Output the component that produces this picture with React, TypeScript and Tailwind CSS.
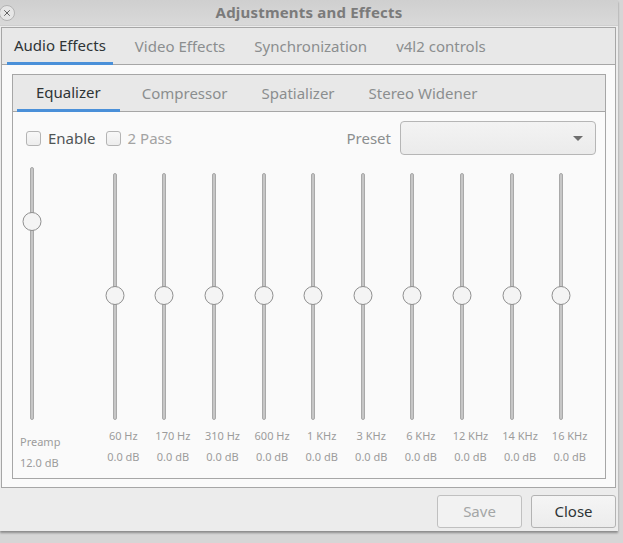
import { X } from "lucide-react"

type Band = {
  freq: string
  gain: string
}

const BANDS: Band[] = [
  { freq: "60 Hz", gain: "0.0 dB" },
  { freq: "170 Hz", gain: "0.0 dB" },
  { freq: "310 Hz", gain: "0.0 dB" },
  { freq: "600 Hz", gain: "0.0 dB" },
  { freq: "1 KHz", gain: "0.0 dB" },
  { freq: "3 KHz", gain: "0.0 dB" },
  { freq: "6 KHz", gain: "0.0 dB" },
  { freq: "12 KHz", gain: "0.0 dB" },
  { freq: "14 KHz", gain: "0.0 dB" },
  { freq: "16 KHz", gain: "0.0 dB" },
]

const MAIN_TABS = ["Audio Effects", "Video Effects", "Synchronization", "v4l2 controls"]
const AUDIO_TABS = ["Equalizer", "Compressor", "Spatializer", "Stereo Widener"]

/**
 * 縦スライダーのレール + つまみ
 */
const VSlider = ({ height, knobTop }: { height: number; knobTop: number }) => (
  <div className="relative flex justify-center" style={{ height }}>
    <div className="h-full w-[4px] rounded-full border border-[#a9a9a9] bg-[#c6c6c6]" />
    <div
      className="absolute left-1/2 h-[19px] w-[19px] -translate-x-1/2 rounded-full border border-[#8f8f8f] bg-[#f4f4f4]"
      style={{ top: knobTop }}
    />
  </div>
)

const Checkbox = ({ label, disabled }: { label: string; disabled?: boolean }) => (
  <label className="flex items-center gap-[7px]">
    <span className="h-[15px] w-[15px] rounded-[3px] border border-[#b4b4b4] bg-gradient-to-b from-[#f8f8f8] to-[#ededed]" />
    <span className={disabled ? "text-[#a3a3a3]" : "text-[#505555]"}>{label}</span>
  </label>
)

export default function App() {
  return (
    <div className="h-[543px] w-[623px] overflow-hidden bg-[#d6d6d6] font-['Noto_Sans',sans-serif] text-[15px] leading-none">
      <div className="flex h-[531px] w-[618px] flex-col bg-[#ececec] shadow-[0_2px_2px_rgba(0,0,0,0.35)]">
        {/* タイトルバー */}
        <div className="relative flex h-[26px] shrink-0 items-center justify-center border-b border-[#cfcfcf] bg-gradient-to-b from-[#cfcfcf] to-[#d9d9d9]">
          <div className="absolute left-[-1px] top-[5px] flex h-[16px] w-[16px] items-center justify-center rounded-full border border-[#b3b3b3] bg-[#e6e6e6]">
            <X className="h-[10px] w-[10px] text-[#555]" strokeWidth={2.2} />
          </div>
          <span className="font-bold tracking-[0.2px] text-[#7b7b7b]">Adjustments and Effects</span>
        </div>

        {/* 外側ノートブック */}
        <div className="ml-[1px] mt-[1px] flex h-[461px] w-[615px] flex-col border border-[#a6a6a6] bg-[#fafafa]">
          <div className="flex h-[37px] shrink-0 items-end gap-[15px] border-b border-[#a6a6a6] bg-[#e8e8e8] pl-[5px]">
            {MAIN_TABS.map((tab, i) => (
              <div
                key={tab}
                className={
                  i === 0
                    ? "mb-[-1px] flex h-[37px] items-center border-b-[3px] border-[#4a90d9] px-[7px] pt-[1px] text-[#2e3436]"
                    : "flex h-[36px] items-center px-[7px] text-[#8b8e8f]"
                }
              >
                {tab}
              </div>
            ))}
          </div>

          {/* イコライザーのフレーム */}
          <div className="ml-[10px] mt-[9px] flex h-[405px] w-[594px] flex-col border border-[#a6a6a6] bg-[#fafafa]">
            <div className="flex h-[37px] shrink-0 items-end border-b border-[#a6a6a6] bg-[#e8e8e8] pl-[4px]">
              {AUDIO_TABS.map((tab, i) => (
                <div
                  key={tab}
                  className={
                    i === 0
                      ? "mb-[-1px] mr-[5px] flex h-[37px] items-center border-b-[3px] border-[#4a90d9] px-[19px] pt-[1px] text-[#2e3436]"
                      : "flex h-[36px] items-center px-[17px] text-[#8b8e8f]"
                  }
                >
                  {tab}
                </div>
              ))}
            </div>

            <div className="mt-[9px] flex h-[34px] items-center justify-between pl-[13px] pr-[9px]">
              <div className="flex items-center gap-[10px]">
                <Checkbox label="Enable" />
                <Checkbox label="2 Pass" disabled />
              </div>
              <div className="flex items-center gap-[9px]">
                <span className="text-[#8b8e8f]">Preset</span>
                <div className="flex h-[34px] w-[196px] items-center justify-end rounded-[4px] border border-[#b6b6b6] bg-gradient-to-b from-[#f3f3f3] to-[#ebebeb] pr-[12px]">
                  <svg width="10" height="5" viewBox="0 0 10 5">
                    <path d="M0 0 L10 0 L5 5 Z" fill="#6e6e6e" />
                  </svg>
                </div>
              </div>
            </div>

            {/* スライダー列 */}
            <div className="flex items-start text-[11px] text-[#9c9c9c]">
              <div className="ml-[7px] flex w-[24px] flex-col">
                <div className="mt-[12px]">
                  <VSlider height={253} knobTop={45} />
                </div>
                <div className="mt-[11px] whitespace-nowrap leading-[21px]">
                  <div>Preamp</div>
                  <div>12.0 dB</div>
                </div>
              </div>

              <div className="ml-[46px] flex">
                {BANDS.map((band) => (
                  <div key={band.freq} className="flex w-[49.6px] flex-col items-center">
                    <div className="mt-[18px] w-full">
                      <VSlider height={247} knobTop={113} />
                    </div>
                    <div className="mt-[5px] flex flex-col items-center whitespace-nowrap pl-[17px] leading-[21px]">
                      <div>{band.freq}</div>
                      <div>{band.gain}</div>
                    </div>
                  </div>
                ))}
              </div>
            </div>
          </div>
        </div>

        {/* ダイアログのボタン */}
        <div className="mt-[7px] flex justify-end gap-[9px] pr-[2px]">
          <button className="h-[33px] w-[85px] rounded-[3px] border border-[#c0c0c0] bg-[#f2f2f2] text-[#a4a6a6]">
            Save
          </button>
          <button className="h-[33px] w-[85px] rounded-[3px] border border-[#b3b3b3] bg-gradient-to-b from-[#f5f5f5] to-[#ececec] text-[#2e3436]">
            Close
          </button>
        </div>
      </div>
    </div>
  )
}
